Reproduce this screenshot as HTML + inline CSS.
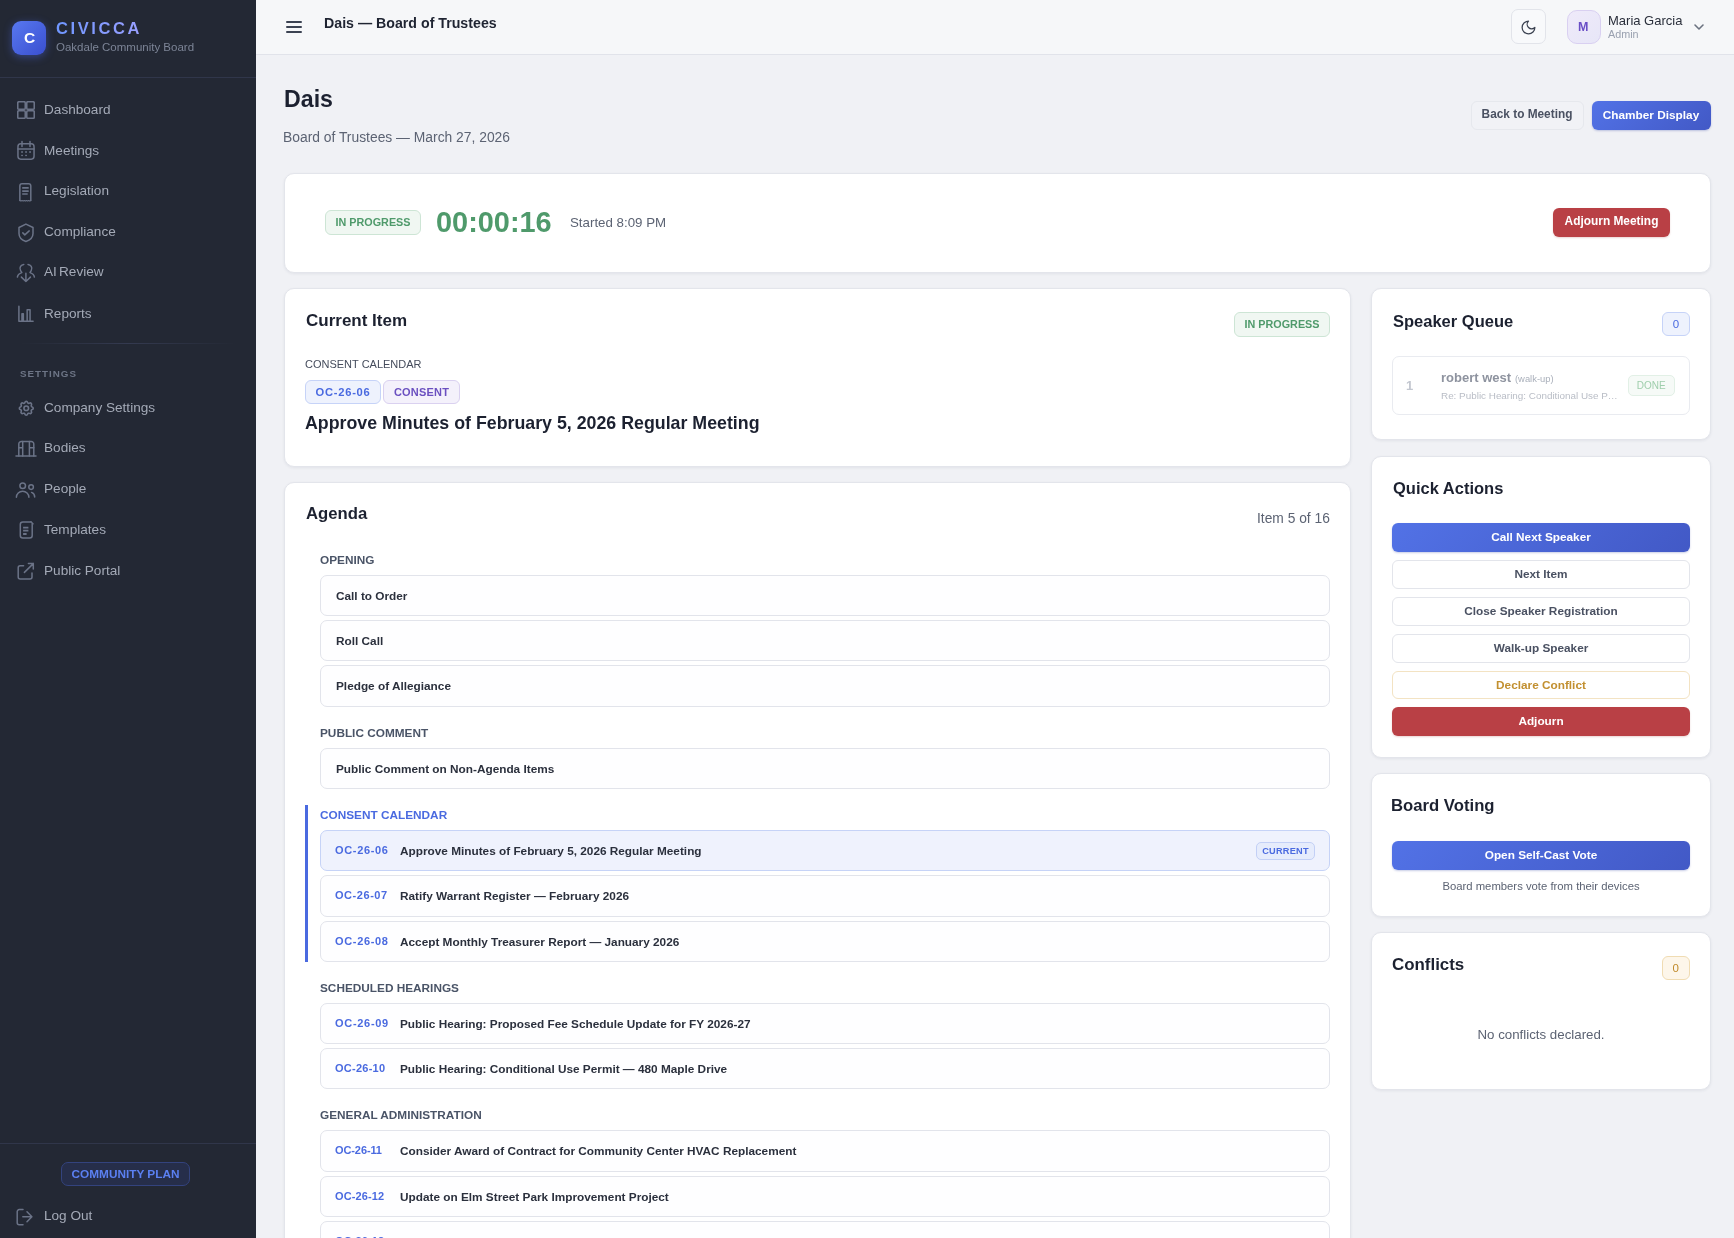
<!DOCTYPE html>
<html><head><meta charset="utf-8"><title>Dais</title>
<style>
*{box-sizing:border-box;margin:0;padding:0}
html,body{width:1734px;height:1238px;overflow:hidden}
body{font-family:"Liberation Sans", sans-serif;background:#f0f1f5;position:relative}
.b{position:absolute}
.t{position:absolute;line-height:1;white-space:nowrap;will-change:transform}
</style></head><body>
<div class="b" style="left:0.00px;top:0.00px;width:256.00px;height:1238.00px;background:#232834"></div>
<div class="b" style="left:12.00px;top:21.00px;width:34.00px;height:34.00px;border-radius:9px;background:linear-gradient(135deg,#5878f0,#3a4fd0);box-shadow:0 2px 9px rgba(80,110,245,.42)"></div>
<div class="t" style="left:23.60px;top:30.27px;font-size:15.5px;color:#ffffff;font-weight:bold;">C</div>
<div class="t" style="left:56.00px;top:20.12px;font-size:16.5px;color:#86a0ff;font-weight:bold;letter-spacing:2.6px;background:linear-gradient(90deg,#6f96ff,#9aa0ff);-webkit-background-clip:text;background-clip:text;color:transparent;">CIVICCA</div>
<div class="t" style="left:56.00px;top:42.46px;font-size:11.5px;color:#7c8496;">Oakdale Community Board</div>
<div class="b" style="left:0.00px;top:77.00px;width:256.00px;height:1.00px;background:#30364a"></div>
<div class="t" style="left:44.20px;top:102.68px;font-size:13.6px;color:#a4aab7;">Dashboard</div>
<div class="t" style="left:44.20px;top:143.78px;font-size:13.6px;color:#a4aab7;">Meetings</div>
<div class="t" style="left:44.20px;top:184.08px;font-size:13.6px;color:#a4aab7;">Legislation</div>
<div class="t" style="left:44.20px;top:224.78px;font-size:13.6px;color:#a4aab7;">Compliance</div>
<div class="t" style="left:44.20px;top:265.48px;font-size:13.6px;color:#a4aab7;word-spacing:-1.6px;">AI Review</div>
<div class="t" style="left:44.20px;top:306.78px;font-size:13.6px;color:#a4aab7;">Reports</div>
<svg class="b" style="left:17px;top:101px" width="18" height="18" viewBox="0 0 24 24" fill="none" stroke="#6b7387" stroke-width="2.13" stroke-linecap="round" stroke-linejoin="round"><rect x="1" y="1" width="10" height="10" rx="1.5"/><rect x="13" y="1" width="10" height="10" rx="1.5"/><rect x="1" y="13" width="10" height="10" rx="1.5"/><rect x="13" y="13" width="10" height="10" rx="1.5"/></svg>
<svg class="b" style="left:17px;top:141px;overflow:visible" width="18" height="18" viewBox="0 0 18 18" fill="none" stroke="#6b7387" stroke-width="1.5" stroke-linecap="round" stroke-linejoin="round"><rect x=".95" y="2.85" width="16.1" height="15.3" rx="2.8"/><path d="M5 .4V5.4M13 .4V5.4M.95 7.9H17.05"/><g fill="#6b7387" stroke="none"><rect x="4.2" y="10.2" width="1.7" height="1.6"/><rect x="8.2" y="10.2" width="1.7" height="1.6"/><rect x="12.2" y="10.2" width="1.7" height="1.6"/><rect x="4.2" y="13.8" width="1.7" height="1.3"/><rect x="8.2" y="13.8" width="1.7" height="1.3"/></g></svg>
<svg class="b" style="left:17px;top:183px;overflow:visible" width="18" height="18" viewBox="0 0 18 18" fill="none" stroke="#6b7387" stroke-width="1.5" stroke-linecap="round" stroke-linejoin="round"><path d="M2.85 17.6V3A2.2 2.2 0 0 1 5.05 .8H11.6A2.2 2.2 0 0 1 13.8 3V17.6"/><path d="M2.85 17.6L3.95 18.1L5.05 17.6L6.15 18.1L7.25 17.6L8.35 18.1L9.45 17.6L10.55 18.1L11.65 17.6L12.75 18.1L13.8 17.6" stroke-width="1.1"/><path d="M5.2 4.9H11.7M5.2 8.1H11.7M5.2 11H10.7" stroke-width="1.7" stroke-linecap="butt"/></svg>
<svg class="b" style="left:17px;top:222px;overflow:visible" width="18" height="18" viewBox="0 0 18 18" fill="none" stroke="#6b7387" stroke-width="1.5" stroke-linecap="round" stroke-linejoin="round"><path d="M8.9 2.1L16 5.5V11.5C16 15.3 13 18.2 8.9 19.5C4.8 18.2 2 15.3 2 11.5V5.5Z"/><path d="M5.8 10.9L7.8 12.9L12.2 8.9"/></svg>
<svg class="b" style="left:17px;top:263px;overflow:visible" width="18" height="18" viewBox="0 0 18 18" fill="none" stroke="#6b7387" stroke-width="1.5" stroke-linecap="round" stroke-linejoin="round"><path d="M6.8 1.4C4.2 1.6 1.8 4.6 3.6 7.6C4.2 8.6 4.8 9.2 4.8 9.6C2.4 10.4 .6 12 .4 14.1"/><path d="M11 1.4C13.6 1.6 16 4.6 14.2 7.6C13.6 8.6 13 9.2 13 9.6C15.4 10.4 17.2 12 17.4 14.1"/><path d="M8.9 10.2V18.5M4.4 14.1L8.9 18.5L13.4 14.1"/></svg>
<svg class="b" style="left:17px;top:305px;overflow:visible" width="18" height="18" viewBox="0 0 18 18" fill="none" stroke="#6b7387" stroke-width="1.5" stroke-linecap="round" stroke-linejoin="round"><path d="M1.9 1.3V16.3H16.1"/><path d="M4.95 16.3V8.75H6.35V16.3M10.15 16.3V4.85H13.05V16.3"/></svg>
<div class="b" style="left:20.00px;top:343.00px;width:216.00px;height:1.00px;background:linear-gradient(90deg,rgba(52,58,80,0),#343a50 50%,rgba(52,58,80,0))"></div>
<div class="t" style="left:20.30px;top:369.00px;font-size:9.8px;color:#6d7586;font-weight:bold;letter-spacing:1.0px;">SETTINGS</div>
<div class="t" style="left:44.20px;top:400.88px;font-size:13.6px;color:#a4aab7;">Company Settings</div>
<div class="t" style="left:44.20px;top:441.08px;font-size:13.6px;color:#a4aab7;">Bodies</div>
<div class="t" style="left:44.20px;top:482.08px;font-size:13.6px;color:#a4aab7;">People</div>
<div class="t" style="left:44.20px;top:523.08px;font-size:13.6px;color:#a4aab7;">Templates</div>
<div class="t" style="left:44.20px;top:563.88px;font-size:13.6px;color:#a4aab7;">Public Portal</div>
<svg class="b" style="left:16.5px;top:398.5px" width="18.5" height="18.5" viewBox="0 0 24 24" fill="none" stroke="#6b7387" stroke-width="2.08" stroke-linecap="round" stroke-linejoin="round"><path d="M10.3 4.3c.4-1.7 3-1.7 3.4 0a1.7 1.7 0 0 0 2.6 1.1c1.5-.9 3.3.8 2.4 2.4a1.7 1.7 0 0 0 1 2.5c1.8.4 1.8 3 0 3.4a1.7 1.7 0 0 0-1 2.6c.9 1.5-.9 3.3-2.4 2.4a1.7 1.7 0 0 0-2.6 1c-.4 1.8-3 1.8-3.4 0a1.7 1.7 0 0 0-2.5-1c-1.6.9-3.3-.9-2.4-2.4a1.7 1.7 0 0 0-1.1-2.6c-1.7-.4-1.7-3 0-3.4a1.7 1.7 0 0 0 1.1-2.5c-.9-1.6.8-3.3 2.4-2.4 1 .6 2.3.1 2.5-1.1z"/><circle cx="12" cy="12" r="3"/></svg>
<svg class="b" style="left:17px;top:440px;overflow:visible" width="18" height="18" viewBox="0 0 18 18" fill="none" stroke="#6b7387" stroke-width="1.5" stroke-linecap="round" stroke-linejoin="round"><path d="M-1 15.9H19"/><path d="M1.8 15.9V4A2.5 2.5 0 0 1 4.3 1.5H14.3A2.5 2.5 0 0 1 16.8 4V15.9"/><path d="M5.7 1.5V15.9M12.4 1.5V15.9M1.8 7.7H5.7M12.4 7.7H16.8"/></svg>
<svg class="b" style="left:17px;top:483px;overflow:visible" width="18" height="18" viewBox="0 0 18 18" fill="none" stroke="#6b7387" stroke-width="1.5" stroke-linecap="round" stroke-linejoin="round"><circle cx="5.7" cy="2.8" r="2.8"/><circle cx="14.1" cy="4.1" r="2.3"/><path d="M-.6 14.3A6.25 6 0 0 1 11.9 14.3"/><path d="M14.6 9.4A4.8 4.8 0 0 1 17.7 13.9"/></svg>
<svg class="b" style="left:17px;top:520px;overflow:visible" width="18" height="18" viewBox="0 0 18 18" fill="none" stroke="#6b7387" stroke-width="1.5" stroke-linecap="round" stroke-linejoin="round"><path d="M14 2H5.8A2.5 2.5 0 0 0 3.3 4.5V15.5A2.5 2.5 0 0 0 5.8 18H12.7A2.5 2.5 0 0 0 15.2 15.5V3.6"/><path d="M13.9 1.6L16.2 3.9" stroke-width="1.2"/><path d="M6.1 7.6H11.4M6.1 10.7H11.4M6.1 14H9.6" stroke-width="1.8" stroke-linecap="butt"/></svg>
<svg class="b" style="left:17px;top:562px;overflow:visible" width="18" height="18" viewBox="0 0 18 18" fill="none" stroke="#6b7387" stroke-width="1.5" stroke-linecap="round" stroke-linejoin="round"><path d="M6.6 3.8H3.2A2 2 0 0 0 1.2 5.8V15.1A2 2 0 0 0 3.2 17.1H13A2 2 0 0 0 15 15.1V10.9"/><path d="M7.4 10.4L16.3 1.6M11.4 1.6H16.3V6.9"/></svg>
<div class="b" style="left:0.00px;top:1143.00px;width:256.00px;height:1.00px;background:#30364a"></div>
<div class="b" style="left:61.00px;top:1162.00px;width:129.00px;height:24.00px;border-radius:7px;background:#262e4a;border:1px solid #33437e;box-sizing:border-box"></div>
<div class="t" style="left:61.00px;width:129px;text-align:center;top:1169.21px;font-size:11.8px;color:#5b80f2;font-weight:bold;">COMMUNITY PLAN</div>
<svg class="b" style="left:16px;top:1208px;overflow:visible" width="18" height="18" viewBox="0 0 18 18" fill="none" stroke="#6b7387" stroke-width="1.5" stroke-linecap="round" stroke-linejoin="round"><path d="M7 1.6H3.2A2 2 0 0 0 1.2 3.6V14.8A2 2 0 0 0 3.2 16.8H7"/><path d="M6.8 8.7H15.5M11 3.8L15.9 8.7L11 13.7"/></svg>
<div class="t" style="left:44.20px;top:1209.28px;font-size:13.6px;color:#a4aab7;">Log Out</div>
<div class="b" style="left:256.00px;top:0.00px;width:1478.00px;height:54.00px;background:#f6f7f9;border-bottom:1px solid #e1e3ea;box-sizing:content-box"></div>
<div class="b" style="left:286.00px;top:21.00px;width:16.00px;height:2.00px;background:#3b4252;border-radius:1px"></div>
<div class="b" style="left:286.00px;top:26.00px;width:16.00px;height:2.00px;background:#3b4252;border-radius:1px"></div>
<div class="b" style="left:286.00px;top:31.00px;width:16.00px;height:2.00px;background:#3b4252;border-radius:1px"></div>
<div class="t" style="left:324.00px;top:15.97px;font-size:14.2px;color:#1f2432;font-weight:bold;">Dais — Board of Trustees</div>
<div class="b" style="left:1511.00px;top:9.00px;width:35.00px;height:35.00px;border-radius:7px;background:#f8f9fb;border:1px solid #e2e4ea"></div>
<svg class="b" style="left:1519.5px;top:18.5px" width="17" height="17" viewBox="0 0 24 24" fill="none" stroke="#3a4150" stroke-width="1.76" stroke-linecap="round" stroke-linejoin="round"><path d="M12 3a6 6 0 0 0 9 9 9 9 0 1 1-9-9z"/></svg>
<div class="b" style="left:1567.00px;top:10.00px;width:34.00px;height:34.00px;border-radius:10px;background:linear-gradient(135deg,#efeafa,#e7e6f7);border:1px solid #d9d0f1"></div>
<div class="t" style="left:1578.00px;top:20.91px;font-size:12.5px;color:#6a4ec6;font-weight:bold;">M</div>
<div class="t" style="left:1608.00px;top:13.99px;font-size:13px;color:#2a2f3b;">Maria Garcia</div>
<div class="t" style="left:1608.00px;top:28.85px;font-size:10.8px;color:#9aa1b0;">Admin</div>
<svg class="b" style="left:1691px;top:18.5px" width="16" height="16" viewBox="0 0 24 24" fill="none" stroke="#6b7280" stroke-width="2.40" stroke-linecap="round" stroke-linejoin="round"><path d="M6 9l6 6 6-6"/></svg>
<div class="t" style="left:284.00px;top:87.75px;font-size:23.2px;color:#1c2130;font-weight:bold;">Dais</div>
<div class="t" style="left:283.30px;top:130.87px;font-size:13.85px;color:#5c6373;">Board of Trustees — March 27, 2026</div>
<div class="b" style="left:1471.00px;top:101.00px;width:113.00px;height:29.00px;border-radius:6px;background:#f1f2f6;border:1px solid #e6e8ed"></div>
<div class="t" style="left:1471.20px;width:112px;text-align:center;top:108.86px;font-size:11.85px;color:#4a5162;font-weight:bold;">Back to Meeting</div>
<div class="b" style="left:1592.00px;top:101.20px;width:118.70px;height:28.60px;border-radius:6px;background:linear-gradient(135deg,#5272e6,#4259c6);box-shadow:0 1px 2px rgba(40,60,160,.25)"></div>
<div class="t" style="left:1592.30px;width:118px;text-align:center;top:109.51px;font-size:11.8px;color:#ffffff;font-weight:bold;">Chamber Display</div>
<div class="b" style="left:284.00px;top:173.00px;width:1427.00px;height:100.00px;background:#fff;border:1px solid #e3e5eb;border-radius:10px;box-shadow:0 1px 3px rgba(30,40,70,.07)"></div>
<div class="b" style="left:325.00px;top:210.20px;width:96.00px;height:24.60px;border-radius:6px;background:#f0f7f2;border:1px solid #cde5d5"></div>
<div class="t" style="left:325.00px;width:96px;text-align:center;top:217.25px;font-size:10.8px;color:#4f9a6b;font-weight:bold;">IN PROGRESS</div>
<div class="t" style="left:436.20px;top:207.92px;font-size:28.9px;color:#4f9a6b;font-weight:bold;">00:00:16</div>
<div class="t" style="left:569.90px;top:215.53px;font-size:13.3px;color:#5c6373;">Started 8:09 PM</div>
<div class="b" style="left:1553.00px;top:208.00px;width:117.00px;height:29.00px;border-radius:6px;background:#b94045;box-shadow:0 1px 2px rgba(150,40,40,.2)"></div>
<div class="t" style="left:1553.00px;width:117px;text-align:center;top:216.32px;font-size:11.9px;color:#ffffff;font-weight:bold;">Adjourn Meeting</div>
<div class="b" style="left:284.00px;top:288.00px;width:1067.00px;height:179.00px;background:#fff;border:1px solid #e3e5eb;border-radius:10px;box-shadow:0 1px 3px rgba(30,40,70,.07)"></div>
<div class="t" style="left:305.60px;top:311.90px;font-size:17px;color:#1c2130;font-weight:bold;">Current Item</div>
<div class="b" style="left:1233.90px;top:312.00px;width:95.80px;height:24.70px;border-radius:6px;background:#f0f7f2;border:1px solid #cde5d5"></div>
<div class="t" style="left:1233.80px;width:96px;text-align:center;top:319.35px;font-size:10.8px;color:#4f9a6b;font-weight:bold;">IN PROGRESS</div>
<div class="t" style="left:305.00px;top:358.68px;font-size:11px;color:#454c5c;">CONSENT CALENDAR</div>
<div class="b" style="left:305.00px;top:380.20px;width:75.50px;height:23.60px;border-radius:6px;background:#eef2fd;border:1px solid #c6d3f8"></div>
<div class="t" style="left:304.75px;width:76px;text-align:center;top:386.51px;font-size:11.2px;color:#4a6ae0;font-weight:bold;letter-spacing:.75px;">OC-26-06</div>
<div class="b" style="left:383.20px;top:380.20px;width:76.60px;height:23.60px;border-radius:6px;background:#f4f1fb;border:1px solid #dad1f0"></div>
<div class="t" style="left:383.00px;width:77px;text-align:center;top:386.68px;font-size:11px;color:#6b50c0;font-weight:bold;letter-spacing:.2px;">CONSENT</div>
<div class="t" style="left:305.00px;top:414.92px;font-size:17.8px;color:#1c2130;font-weight:bold;">Approve Minutes of February 5, 2026 Regular Meeting</div>
<div class="b" style="left:284.00px;top:482.00px;width:1067.00px;height:818.00px;background:#fff;border:1px solid #e3e5eb;border-radius:10px;box-shadow:0 1px 3px rgba(30,40,70,.07)"></div>
<div class="t" style="left:306.00px;top:506.06px;font-size:16.7px;color:#1c2130;font-weight:bold;">Agenda</div>
<div class="t" style="right:404.40px;top:512.31px;font-size:13.8px;color:#5c6373;">Item 5 of 16</div>
<div class="t" style="left:320.30px;top:555.01px;font-size:11.8px;color:#4a5467;font-weight:bold;">OPENING</div>
<div class="b" style="left:320.00px;top:575.00px;width:1010.00px;height:41.00px;border-radius:7px;background:#fefeff;border:1px solid #e2e4eb"></div>
<div class="t" style="left:335.50px;top:591.01px;font-size:11.8px;color:#2b303d;font-weight:bold;">Call to Order</div>
<div class="b" style="left:320.00px;top:620.00px;width:1010.00px;height:41.00px;border-radius:7px;background:#fefeff;border:1px solid #e2e4eb"></div>
<div class="t" style="left:335.50px;top:636.01px;font-size:11.8px;color:#2b303d;font-weight:bold;">Roll Call</div>
<div class="b" style="left:320.00px;top:665.00px;width:1010.00px;height:42.00px;border-radius:7px;background:#fefeff;border:1px solid #e2e4eb"></div>
<div class="t" style="left:335.50px;top:681.01px;font-size:11.8px;color:#2b303d;font-weight:bold;">Pledge of Allegiance</div>
<div class="t" style="left:320.30px;top:728.01px;font-size:11.8px;color:#4a5467;font-weight:bold;">PUBLIC COMMENT</div>
<div class="b" style="left:320.00px;top:748.00px;width:1010.00px;height:41.00px;border-radius:7px;background:#fefeff;border:1px solid #e2e4eb"></div>
<div class="t" style="left:335.50px;top:764.01px;font-size:11.8px;color:#2b303d;font-weight:bold;">Public Comment on Non-Agenda Items</div>
<div class="b" style="left:305.00px;top:805.00px;width:3.00px;height:157.00px;background:#4a6ae0"></div>
<div class="t" style="left:320.30px;top:810.01px;font-size:11.8px;color:#4a6ae0;font-weight:bold;">CONSENT CALENDAR</div>
<div class="b" style="left:320.00px;top:830.00px;width:1010.00px;height:41.00px;border-radius:7px;background:#eff2fd;border:1px solid #c6d3f7"></div>
<div class="t" style="left:335.00px;top:845.18px;font-size:11px;color:#4a6ae0;font-weight:bold;letter-spacing:0.67px;">OC-26-06</div>
<div class="t" style="left:400.30px;top:846.21px;font-size:11.8px;color:#2b303d;font-weight:bold;">Approve Minutes of February 5, 2026 Regular Meeting</div>
<div class="b" style="left:1256.00px;top:842.00px;width:59.00px;height:18.00px;border-radius:5px;background:#e6ecfc;border:1px solid #c3d0f6"></div>
<div class="t" style="left:1256.00px;width:59px;text-align:center;top:846.81px;font-size:9.2px;color:#4a6ae0;font-weight:bold;letter-spacing:.25px;">CURRENT</div>
<div class="b" style="left:320.00px;top:875.00px;width:1010.00px;height:42.00px;border-radius:7px;background:#fefeff;border:1px solid #e2e4eb"></div>
<div class="t" style="left:335.00px;top:890.18px;font-size:11px;color:#4a6ae0;font-weight:bold;letter-spacing:0.55px;">OC-26-07</div>
<div class="t" style="left:400.30px;top:891.21px;font-size:11.8px;color:#2b303d;font-weight:bold;">Ratify Warrant Register — February 2026</div>
<div class="b" style="left:320.00px;top:921.00px;width:1010.00px;height:41.00px;border-radius:7px;background:#fefeff;border:1px solid #e2e4eb"></div>
<div class="t" style="left:335.00px;top:936.18px;font-size:11px;color:#4a6ae0;font-weight:bold;letter-spacing:0.67px;">OC-26-08</div>
<div class="t" style="left:400.30px;top:937.21px;font-size:11.8px;color:#2b303d;font-weight:bold;">Accept Monthly Treasurer Report — January 2026</div>
<div class="t" style="left:320.30px;top:983.01px;font-size:11.8px;color:#4a5467;font-weight:bold;">SCHEDULED HEARINGS</div>
<div class="b" style="left:320.00px;top:1003.00px;width:1010.00px;height:41.00px;border-radius:7px;background:#fefeff;border:1px solid #e2e4eb"></div>
<div class="t" style="left:335.00px;top:1018.18px;font-size:11px;color:#4a6ae0;font-weight:bold;letter-spacing:0.70px;">OC-26-09</div>
<div class="t" style="left:400.30px;top:1019.21px;font-size:11.8px;color:#2b303d;font-weight:bold;">Public Hearing: Proposed Fee Schedule Update for FY 2026-27</div>
<div class="b" style="left:320.00px;top:1048.00px;width:1010.00px;height:41.00px;border-radius:7px;background:#fefeff;border:1px solid #e2e4eb"></div>
<div class="t" style="left:335.00px;top:1063.18px;font-size:11px;color:#4a6ae0;font-weight:bold;letter-spacing:0.25px;">OC-26-10</div>
<div class="t" style="left:400.30px;top:1064.21px;font-size:11.8px;color:#2b303d;font-weight:bold;">Public Hearing: Conditional Use Permit — 480 Maple Drive</div>
<div class="t" style="left:320.30px;top:1110.01px;font-size:11.8px;color:#4a5467;font-weight:bold;">GENERAL ADMINISTRATION</div>
<div class="b" style="left:320.00px;top:1130.00px;width:1010.00px;height:42.00px;border-radius:7px;background:#fefeff;border:1px solid #e2e4eb"></div>
<div class="t" style="left:335.00px;top:1145.18px;font-size:11px;color:#4a6ae0;font-weight:bold;letter-spacing:-0.10px;">OC-26-11</div>
<div class="t" style="left:400.30px;top:1146.21px;font-size:11.8px;color:#2b303d;font-weight:bold;">Consider Award of Contract for Community Center HVAC Replacement</div>
<div class="b" style="left:320.00px;top:1176.00px;width:1010.00px;height:41.00px;border-radius:7px;background:#fefeff;border:1px solid #e2e4eb"></div>
<div class="t" style="left:335.00px;top:1191.18px;font-size:11px;color:#4a6ae0;font-weight:bold;letter-spacing:0.10px;">OC-26-12</div>
<div class="t" style="left:400.30px;top:1192.21px;font-size:11.8px;color:#2b303d;font-weight:bold;">Update on Elm Street Park Improvement Project</div>
<div class="b" style="left:320.00px;top:1221.00px;width:1010.00px;height:42.00px;border-radius:7px;background:#fefeff;border:1px solid #e2e4eb"></div>
<div class="t" style="left:335.00px;top:1236.18px;font-size:11px;color:#4a6ae0;font-weight:bold;letter-spacing:0.10px;">OC-26-13</div>
<div class="t" style="left:400.30px;top:1237.21px;font-size:11.8px;color:#2b303d;font-weight:bold;">Adopt Resolution 2026-04 Declaring Community Surplus Water Conservation Levels</div>
<div class="b" style="left:1371.00px;top:288.00px;width:340.00px;height:152.00px;background:#fff;border:1px solid #e3e5eb;border-radius:10px;box-shadow:0 1px 3px rgba(30,40,70,.07)"></div>
<div class="t" style="left:1392.50px;top:312.62px;font-size:16.5px;color:#1c2130;font-weight:bold;">Speaker Queue</div>
<div class="b" style="left:1662.00px;top:312.00px;width:27.70px;height:24.40px;border-radius:6px;background:#eef2fd;border:1px solid #c6d3f8"></div>
<div class="t" style="left:1661.85px;width:28px;text-align:center;top:318.56px;font-size:11.5px;color:#4a6ae0;">0</div>
<div class="b" style="left:1392.00px;top:356.00px;width:298.00px;height:59.00px;border-radius:7px;background:#fff;border:1px solid #e9ebf0"></div>
<div class="t" style="left:1406.00px;top:379.29px;font-size:13px;color:#c3c7d0;font-weight:bold;">1</div>
<div class="t" style="left:1441.00px;top:370.99px;font-size:13px;color:#8e939f;font-weight:bold;">robert west</div>
<div class="t" style="left:1514.70px;top:374.04px;font-size:9.4px;color:#aab0bb;">(walk-up)</div>
<div class="t" style="left:1441.00px;top:391.21px;font-size:9.9px;color:#b9bdc6;">Re: Public Hearing: Conditional Use P…</div>
<div class="b" style="left:1628.00px;top:375.00px;width:47.00px;height:21.00px;border-radius:5px;background:#f6faf7;border:1px solid #e2f0e6"></div>
<div class="t" style="left:1628.00px;width:46.6px;text-align:center;top:380.93px;font-size:10px;color:#9fceac;">DONE</div>
<div class="b" style="left:1371.00px;top:456.00px;width:340.00px;height:302.00px;background:#fff;border:1px solid #e3e5eb;border-radius:10px;box-shadow:0 1px 3px rgba(30,40,70,.07)"></div>
<div class="t" style="left:1392.50px;top:480.32px;font-size:16.5px;color:#1c2130;font-weight:bold;">Quick Actions</div>
<div class="b" style="left:1392.00px;top:523.00px;width:298.00px;height:29.00px;border-radius:6px;background:linear-gradient(135deg,#5272e6,#4259c6);box-shadow:0 1px 2px rgba(40,60,160,.25)"></div>
<div class="t" style="left:1392.00px;width:298px;text-align:center;top:532.21px;font-size:11.8px;color:#ffffff;font-weight:bold;">Call Next Speaker</div>
<div class="b" style="left:1392.00px;top:560.00px;width:298.00px;height:29.00px;border-radius:6px;background:#fff;border:1px solid #e3e5eb"></div>
<div class="t" style="left:1392.00px;width:298px;text-align:center;top:569.01px;font-size:11.8px;color:#4a5162;font-weight:bold;">Next Item</div>
<div class="b" style="left:1392.00px;top:597.00px;width:298.00px;height:29.00px;border-radius:6px;background:#fff;border:1px solid #e3e5eb"></div>
<div class="t" style="left:1392.00px;width:298px;text-align:center;top:606.01px;font-size:11.8px;color:#4a5162;font-weight:bold;">Close Speaker Registration</div>
<div class="b" style="left:1392.00px;top:634.00px;width:298.00px;height:29.00px;border-radius:6px;background:#fff;border:1px solid #e3e5eb"></div>
<div class="t" style="left:1392.00px;width:298px;text-align:center;top:643.01px;font-size:11.8px;color:#4a5162;font-weight:bold;">Walk-up Speaker</div>
<div class="b" style="left:1392.00px;top:671.00px;width:298.00px;height:28.00px;border-radius:6px;background:#fff;border:1px solid #f3e3c3"></div>
<div class="t" style="left:1392.00px;width:298px;text-align:center;top:679.81px;font-size:11.8px;color:#c29030;font-weight:bold;">Declare Conflict</div>
<div class="b" style="left:1392.00px;top:707.00px;width:298.00px;height:29.00px;border-radius:6px;background:#b94045;box-shadow:0 1px 2px rgba(150,40,40,.2)"></div>
<div class="t" style="left:1392.00px;width:298px;text-align:center;top:716.01px;font-size:11.8px;color:#ffffff;font-weight:bold;">Adjourn</div>
<div class="b" style="left:1371.00px;top:773.00px;width:340.00px;height:144.00px;background:#fff;border:1px solid #e3e5eb;border-radius:10px;box-shadow:0 1px 3px rgba(30,40,70,.07)"></div>
<div class="t" style="left:1391.20px;top:798.06px;font-size:16.7px;color:#1c2130;font-weight:bold;">Board Voting</div>
<div class="b" style="left:1392.00px;top:841.00px;width:298.00px;height:29.00px;border-radius:6px;background:linear-gradient(135deg,#5272e6,#4259c6);box-shadow:0 1px 2px rgba(40,60,160,.25)"></div>
<div class="t" style="left:1392.00px;width:298px;text-align:center;top:849.51px;font-size:11.8px;color:#ffffff;font-weight:bold;">Open Self-Cast Vote</div>
<div class="t" style="left:1392.00px;width:298px;text-align:center;top:880.83px;font-size:11.3px;color:#5c6373;">Board members vote from their devices</div>
<div class="b" style="left:1371.00px;top:932.00px;width:340.00px;height:158.00px;background:#fff;border:1px solid #e3e5eb;border-radius:10px;box-shadow:0 1px 3px rgba(30,40,70,.07)"></div>
<div class="t" style="left:1392.20px;top:957.19px;font-size:16.9px;color:#1c2130;font-weight:bold;">Conflicts</div>
<div class="b" style="left:1662.00px;top:956.30px;width:27.50px;height:24.20px;border-radius:6px;background:#fdf6ea;border:1px solid #f0dcb3"></div>
<div class="t" style="left:1662.00px;width:27.5px;text-align:center;top:962.66px;font-size:11.5px;color:#c08a2a;">0</div>
<div class="t" style="left:1392.00px;width:298px;text-align:center;top:1027.93px;font-size:13.3px;color:#5c6373;">No conflicts declared.</div>
</body></html>
